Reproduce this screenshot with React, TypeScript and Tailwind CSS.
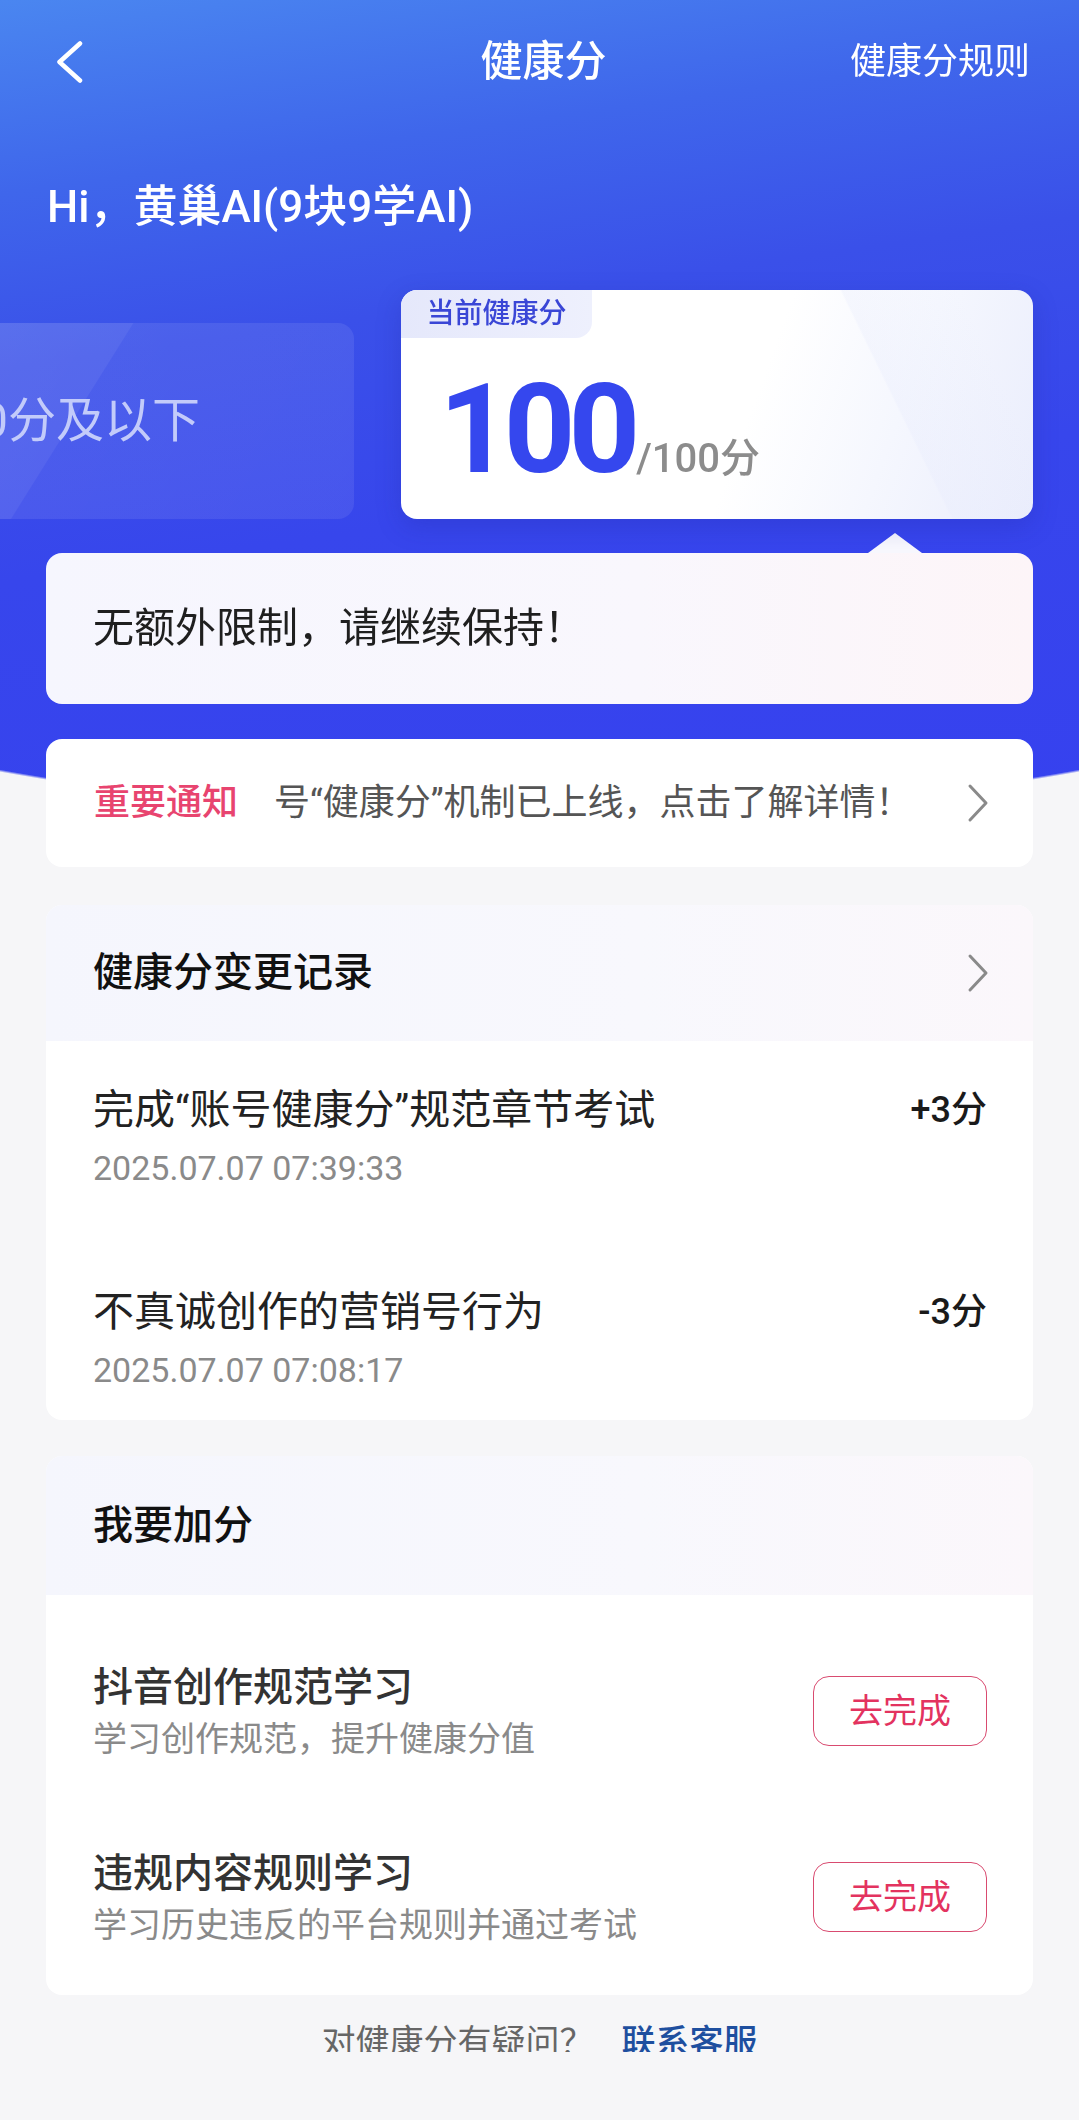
import React from "react";

interface ScoreRecord {
  title: string;
  time: string;
  delta: string;
}

interface Task {
  title: string;
  desc: string;
}

const records: ScoreRecord[] = [
  { title: "完成“账号健康分”规范章节考试", time: "2025.07.07 07:39:33", delta: "+3分" },
  { title: "不真诚创作的营销号行为", time: "2025.07.07 07:08:17", delta: "-3分" },
];

const tasks: Task[] = [
  { title: "抖音创作规范学习", desc: "学习创作规范，提升健康分值" },
  { title: "违规内容规则学习", desc: "学习历史违反的平台规则并通过考试" },
];

const Chevron: React.FC = () => (
  <svg width="22" height="40" viewBox="0 0 22 40" fill="none">
    <path d="M3 3 L19 20 L3 37" stroke="#8a8a8a" strokeWidth="3" strokeLinecap="round" strokeLinejoin="round" />
  </svg>
);

const App: React.FC = () => {
  return (
    <div className="min-h-[2120px] w-full overflow-hidden bg-[#f6f6f8] font-['Roboto','Noto_Sans_CJK_SC',sans-serif]">
      {/* Blue header */}
      <div className="h-[819px] bg-[linear-gradient(172deg,#4a86f0_0%,#3f66eb_20%,#3a50e9_38%,#3746ec_60%,#3641ef_100%)] [mask-image:radial-gradient(ellipse_1617px_819px_at_50%_0,#000_99.7%,transparent_100%)]">
        <div className="grid h-[124px] grid-cols-[1fr_auto_1fr] items-center pl-[57px] pr-[49px] text-white">
          <svg width="26" height="42" viewBox="0 0 26 42" fill="none">
            <path d="M23 2.5 L2.5 21 L23 39.5" stroke="#ffffff" strokeWidth="4.5" strokeLinecap="round" strokeLinejoin="round" />
          </svg>
          <div className="text-[42px] font-medium leading-none">健康分</div>
          <div className="justify-self-end text-[36px] leading-none">健康分规则</div>
        </div>

        <div className="mt-[53px] pl-[47px] text-[44px] font-medium leading-[60px] text-white">
          Hi，黄巢AI(9块9学AI)
        </div>

        <div className="mt-[53px] flex items-end gap-[47px]">
          <div className="-ml-[160px] flex h-[196px] w-[514px] shrink-0 items-center rounded-[16px] bg-[linear-gradient(122deg,rgba(255,255,255,0.17)_0%,rgba(255,255,255,0.14)_46%,rgba(255,255,255,0.09)_46.2%,rgba(255,255,255,0.08)_100%)] pl-[114px] text-[48px] leading-none text-[#c3cbfa]">
            90分及以下
          </div>
          <div className="h-[229px] w-[632px] shrink-0 overflow-hidden rounded-[16px] bg-[linear-gradient(64deg,rgba(255,255,255,0)_74%,rgba(230,234,252,0.3)_74.3%,rgba(255,255,255,0)_90%),linear-gradient(110deg,#ffffff_0%,#ffffff_55%,#f5f7fe_76%,#eaedfc_100%)] shadow-[0_8px_24px_rgba(30,40,160,0.25)]">
            <div className="flex h-[48px] w-[191px] items-center justify-center rounded-br-[16px] bg-[linear-gradient(90deg,#e5e8fb,#eef0fd)] text-[28px] font-medium text-[#3a46d6]">
              当前健康分
            </div>
            <div className="mt-[29px] flex items-baseline pl-[38px]">
              <span className="text-[125px] font-bold leading-none tracking-[-7px] text-[#3547ee]">100</span>
              <span className="ml-[3px] text-[40px] font-medium leading-none text-[#8c8c8c]">/100分</span>
            </div>
          </div>
        </div>

        <div className="px-[46px]">
          <div className="ml-[822px] mt-[14px] h-0 w-0 border-b-[20px] border-l-[27px] border-r-[27px] border-b-[#f8f8fe] border-l-transparent border-r-transparent" />
          <div className="flex h-[151px] items-center rounded-[16px] bg-[linear-gradient(90deg,#f6f6fe_0%,#f9f7fd_60%,#fdf5f8_100%)] pl-[47px] text-[41px] leading-none text-[#1f1f1f]">
            无额外限制，请继续保持！
          </div>
        </div>
      </div>

      <div className="px-[46px]">
        {/* Notice */}
        <div className="relative z-10 -mt-[80px] flex h-[128px] items-center rounded-[16px] bg-white pl-[48px] pr-[44px]">
          <span className="text-[36px] font-medium leading-none text-[#e8446f]">重要通知</span>
          <span className="ml-[36px] flex-1 text-[36px] leading-none text-[#555555]">号“健康分”机制已上线，点击了解详情！</span>
          <Chevron />
        </div>

        {/* Records */}
        <div className="mt-[38px] overflow-hidden rounded-[16px] bg-white">
          <div className="flex h-[136px] items-center justify-between bg-[linear-gradient(90deg,#f5f6fd_0%,#f8f8fd_60%,#fbf7fb_100%)] pl-[47px] pr-[44px]">
            <span className="text-[40px] font-medium leading-none text-[#111111]">健康分变更记录</span>
            <Chevron />
          </div>
          <div className="flex flex-col gap-[92px] pb-[26px] pl-[47px] pr-[46px] pt-[41px]">
            {records.map((r, i) => (
              <div key={i} className="flex items-start justify-between">
                <div>
                  <div className="text-[41px] leading-[56px] text-[#222222]">{r.title}</div>
                  <div className="mt-[6px] text-[34px] leading-[48px] text-[#8a8a8a]">{r.time}</div>
                </div>
                <div className="text-[36px] font-medium leading-[56px] text-[#1a1a1a]">{r.delta}</div>
              </div>
            ))}
          </div>
        </div>

        {/* Tasks */}
        <div className="mt-[36px] overflow-hidden rounded-[16px] bg-white">
          <div className="flex h-[139px] items-center bg-[linear-gradient(90deg,#f5f6fd_0%,#f8f8fd_60%,#fbf7fb_100%)] pl-[47px]">
            <span className="text-[40px] font-medium leading-none text-[#111111]">我要加分</span>
          </div>
          <div className="flex flex-col gap-[84px] pb-[47px] pl-[47px] pr-[46px] pt-[65px]">
            {tasks.map((t, i) => (
              <div key={i} className="flex items-center justify-between">
                <div>
                  <div className="text-[40px] font-medium leading-[56px] text-[#333333]">{t.title}</div>
                  <div className="text-[34px] leading-[46px] text-[#8a8a8a]">{t.desc}</div>
                </div>
                <button className="flex h-[70px] w-[174px] items-center justify-center rounded-[16px] border-[1.5px] border-[#d94b70] text-[34px] leading-none text-[#e3335f]">
                  去完成
                </button>
              </div>
            ))}
          </div>
        </div>

        {/* Footer, cut by the bottom edge as in the screen */}
        <div className="mt-[23px] h-[34px] overflow-hidden text-center text-[34px] leading-[48px]">
          <span className="text-[#666666]">对健康分有疑问？</span>
          <span className="ml-[28px] font-medium text-[#1e4f9f]">联系客服</span>
        </div>
      </div>
    </div>
  );
};

export default App;
